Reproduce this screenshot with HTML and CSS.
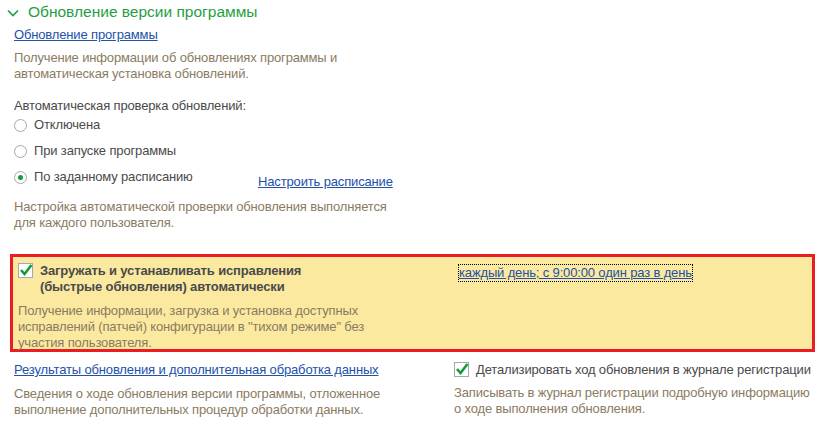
FILE: index.html
```html
<!DOCTYPE html>
<html lang="ru">
<head>
<meta charset="utf-8">
<link rel="stylesheet" href="styles.css">
</head>
<body>
<div class="page">
  <div class="group-head">
    <svg class="chevron" width="12" height="8" viewBox="0 0 12 8"><path d="M1 1.5 L6 6.5 L11 1.5" fill="none" stroke="#1f9e45" stroke-width="1.6"/></svg>
    <span>Обновление версии программы</span>
  </div>

  <div class="section">
    <a class="link" href="#">Обновление программы</a>
    <p class="note">Получение информации об обновлениях программы и<br>автоматическая установка обновлений.</p>
    <div class="label">Автоматическая проверка обновлений:</div>
    <div class="radio-block">
      <div class="radios">
        <div class="radio"><span class="circle"></span>Отключена</div>
        <div class="radio"><span class="circle"></span>При запуске программы</div>
        <div class="radio"><span class="circle on"></span>По заданному расписанию</div>
      </div>
      <a class="link schedule" href="#">Настроить расписание</a>
    </div>
    <p class="note">Настройка автоматической проверки обновления выполняется<br>для каждого пользователя.</p>
  </div>

  <div class="highlight">
    <div class="col-left">
      <div class="check bold">
        <span class="box"><svg width="14" height="12" viewBox="0 0 14 12"><path d="M2 6 L5.5 10 L12.5 1" fill="none" stroke="#139a3c" stroke-width="2.6"/></svg></span>
        <span>Загружать и устанавливать исправления<br>(быстрые обновления) автоматически</span>
      </div>
      <p class="note">Получение информации, загрузка и установка доступных<br>исправлений (патчей) конфигурации в "тихом режиме" без<br>участия пользователя.</p>
    </div>
    <div class="col-right">
      <a class="link focused" href="#">каждый день; с 9:00:00 один раз в день</a>
    </div>
  </div>

  <div class="bottom">
    <div class="col-left">
      <a class="link" href="#">Результаты обновления и дополнительная обработка данных</a>
      <p class="note">Сведения о ходе обновления версии программы, отложенное<br>выполнение дополнительных процедур обработки данных.</p>
    </div>
    <div class="col-right">
      <div class="check">
        <span class="box"><svg width="14" height="12" viewBox="0 0 14 12"><path d="M2 6 L5.5 10 L12.5 1" fill="none" stroke="#139a3c" stroke-width="2.6"/></svg></span>
        <span>Детализировать ход обновления в журнале регистрации</span>
      </div>
      <p class="note">Записывать в журнал регистрации подробную информацию<br>о ходе выполнения обновления.</p>
    </div>
  </div>
</div>
</body>
</html>
```

FILE: styles.css
```css
html, body {
  margin: 0;
  padding: 0;
  background: #ffffff;
}
body {
  font-family: "Liberation Sans", Arial, sans-serif;
  font-size: 13px;
  line-height: 16px;
  letter-spacing: -0.15px;
  color: #4a4a4a;
}
.page {
  width: 821px;
  height: 425px;
  overflow: hidden;
}
.group-head {
  display: flex;
  align-items: center;
  gap: 9px;
  padding: 2px 0 0 7px;
  height: 20px;
  color: #1f9e45;
  font-size: 15.5px;
  letter-spacing: 0;
  line-height: 20px;
}
.chevron {
  margin-top: 2px;
}
.section {
  padding: 5px 0 0 14px;
  display: flex;
  flex-direction: column;
  align-items: flex-start;
}
.link {
  color: #2351a8;
  text-decoration: underline;
}
.note {
  margin: 0;
  color: #8a7b62;
}
.section > .link {
  margin-bottom: 7px;
}
.section > .note {
  margin-bottom: 16px;
}
.label {
  margin-bottom: 3px;
}
.radio-block {
  display: flex;
  align-items: flex-start;
  margin-bottom: 14px;
}
.radios {
  display: flex;
  flex-direction: column;
  gap: 10px;
  width: 244px;
}
.radio {
  display: flex;
  align-items: center;
  gap: 7px;
}
.circle {
  width: 13px;
  height: 13px;
  border: 1px solid #a8a8a8;
  border-radius: 50%;
  background: #fff;
  box-sizing: border-box;
  display: inline-flex;
  align-items: center;
  justify-content: center;
}
.circle.on::after {
  content: "";
  width: 5px;
  height: 5px;
  border-radius: 50%;
  background: #139a3c;
}
.schedule {
  margin-top: 57px;
  margin-bottom: -5px;
}
.highlight {
  margin: 7px 6px 0 10px;
  height: 98px;
  box-sizing: border-box;
  border: 3px solid #ec1c24;
  background: #fbe9a0;
  padding: 6px 0 0 5px;
  display: grid;
  grid-template-columns: 441px 1fr;
}
.check {
  display: flex;
  align-items: flex-start;
  gap: 7px;
}
.check.bold {
  font-weight: bold;
  color: #4a4a4a;
  margin-bottom: 8px;
}
.box {
  width: 15px;
  height: 15px;
  border: 1px solid #a8a8a8;
  background: #fff;
  box-sizing: border-box;
  position: relative;
  flex: none;
  margin-top: 0;
}
.box svg {
  position: absolute;
  left: 0;
  top: 0;
}
.focused {
  outline: 1px dotted #000;
  outline-offset: 0;
}
.col-right .focused {
  margin-top: 2px;
  display: inline-block;
}
.bottom {
  display: grid;
  grid-template-columns: 440px 1fr;
  padding: 10px 0 0 14px;
}
.bottom .col-left .link {
  display: inline-block;
  margin-bottom: 8px;
}
.bottom .check {
  margin-bottom: 7px;
}
```
